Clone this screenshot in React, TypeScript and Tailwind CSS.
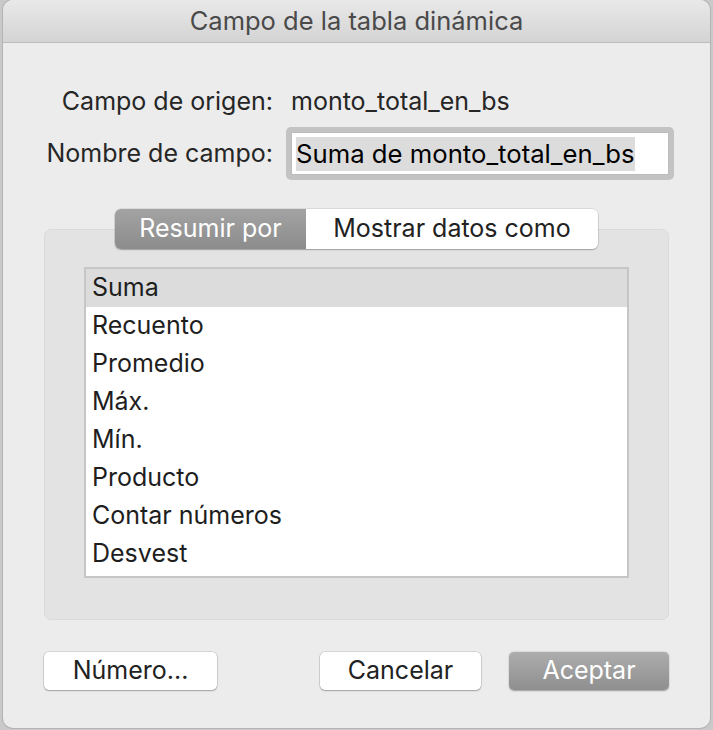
import * as React from 'react'

const FONT = { fontFamily: 'Inter, Roboto, "Liberation Sans", sans-serif' }

const OPTIONS = [
  'Suma',
  'Recuento',
  'Promedio',
  'Máx.',
  'Mín.',
  'Producto',
  'Contar números',
  'Desvest'
]

function PushButton({
  label,
  primary,
  className
}: {
  label: string
  primary?: boolean
  className?: string
}): React.JSX.Element {
  return (
    <button
      type="button"
      className={
        'flex h-[38px] items-center justify-center rounded-[5px] text-[25px] ' +
        (primary
          ? 'bg-gradient-to-b from-[#adadad] to-[#8f8f8f] text-white shadow-[0_0.5px_1.5px_rgba(0,0,0,0.35)] '
          : 'bg-white text-[#222] shadow-[0_0_0_0.5px_rgba(0,0,0,0.18),0_1px_1.5px_rgba(0,0,0,0.25)] ') +
        (className ?? '')
      }
    >
      {label}
    </button>
  )
}

export default function App(): React.JSX.Element {
  const [selected, setSelected] = React.useState(0)
  const [tab, setTab] = React.useState<'resumir' | 'mostrar'>('resumir')

  return (
    <div className="flex h-[730px] w-[713px] bg-[#c9c9c9] px-[3px] pb-[2px]" style={FONT}>
      <div className="flex flex-1 flex-col overflow-hidden rounded-[10px] bg-[#ececec] shadow-[0_0_0_1px_#b4b4b4]">
        <div className="flex h-[43px] shrink-0 items-center justify-center border-b border-[#bdbdbd] bg-gradient-to-b from-[#e9e9e9] to-[#d4d4d4] text-[25.5px] text-[#4a4a4a]">
          Campo de la tabla dinámica
        </div>

        <div className="grid grid-cols-[270px_1fr] items-center gap-y-[12px] pt-[44px] pr-[36px] text-[25px] text-[#262626]">
          <div className="text-right leading-[28px]">Campo de origen:</div>
          <div className="pl-[18px] leading-[28px]">monto_total_en_bs</div>

          <div className="text-right">Nombre de campo:</div>
          <div className="pl-[13px]">
            <div className="rounded-[5px] bg-[#c3c3c3] p-[5px]">
              <div className="flex h-[43px] items-center border border-[#bcbcbc] bg-white pl-[4px]">
                <span className="bg-[#dcdcdc] text-[25.7px] leading-[34px] text-black">
                  Suma de monto_total_en_bs
                </span>
              </div>
            </div>
          </div>
        </div>

        <div className="relative mx-[41px] mt-[49px] h-[391px] rounded-[7px] border border-[#dadada] bg-[#e3e3e3]">
          <div className="absolute -top-[21px] left-[70px] flex h-[40px] w-[483px] overflow-hidden rounded-[6px] text-[25px] shadow-[0_0_0_0.5px_rgba(0,0,0,0.15),0_1px_1.5px_rgba(0,0,0,0.25)]">
            <button
              type="button"
              onClick={() => setTab('resumir')}
              className={
                'flex w-[191px] items-center justify-center ' +
                (tab === 'resumir'
                  ? 'bg-gradient-to-b from-[#a3a3a3] to-[#8c8c8c] text-white'
                  : 'bg-white text-[#222]')
              }
            >
              Resumir por
            </button>
            <button
              type="button"
              onClick={() => setTab('mostrar')}
              className={
                'flex flex-1 items-center justify-center ' +
                (tab === 'mostrar'
                  ? 'bg-gradient-to-b from-[#a3a3a3] to-[#8c8c8c] text-white'
                  : 'bg-white text-[#222]')
              }
            >
              Mostrar datos como
            </button>
          </div>

          <div className="mx-[39px] mt-[37px] h-[311px] border-2 border-[#c6c6c6] bg-white">
            {OPTIONS.map((option, i) => (
              <div
                key={option}
                onClick={() => setSelected(i)}
                className={
                  'flex h-[38px] items-center px-[6px] text-[25px] text-[#1e1e1e] ' +
                  (selected === i ? 'bg-[#dcdcdc]' : '')
                }
              >
                {option}
              </div>
            ))}
          </div>
        </div>

        <div className="mt-[32px] flex items-center px-[41px]">
          <PushButton label="Número..." className="w-[173px]" />
          <div className="flex-1" />
          <PushButton label="Cancelar" className="w-[161px]" />
          <PushButton label="Aceptar" primary className="ml-[28px] w-[160px]" />
        </div>
      </div>
    </div>
  )
}
